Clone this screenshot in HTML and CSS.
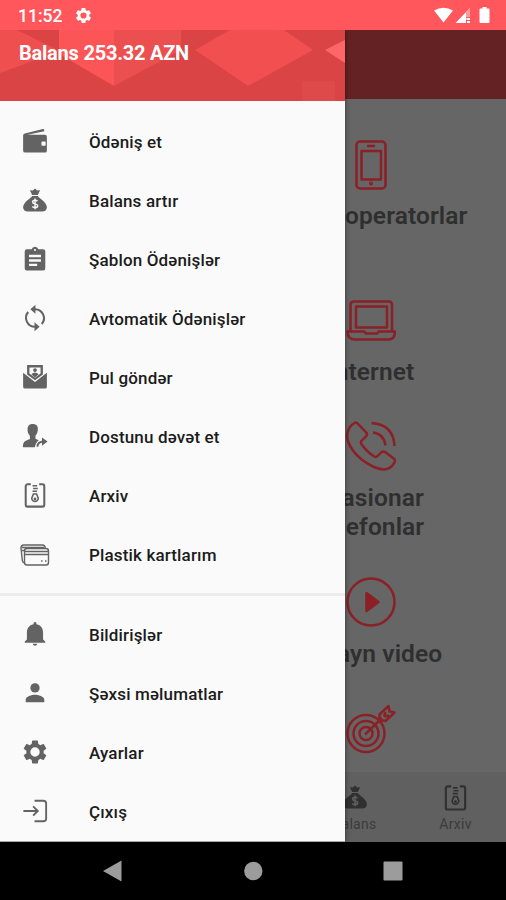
FILE: index.html
```html
<!DOCTYPE html>
<html lang="az">
<head>
<meta charset="utf-8">
<title>Balans</title>
<link rel="stylesheet" href="styles.css">
</head>
<body>
<svg class="defs" width="0" height="0">
  <symbol id="gear" viewBox="0 0 24 24"><path d="M19.14 12.94c.04-.3.06-.61.06-.94s-.02-.64-.07-.94l2.03-1.58a.49.49 0 0 0 .12-.61l-1.92-3.32a.49.49 0 0 0-.59-.22l-2.39.96a7 7 0 0 0-1.62-.94l-.36-2.54a.48.48 0 0 0-.48-.41h-3.84a.48.48 0 0 0-.47.41l-.36 2.54a7.3 7.3 0 0 0-1.62.94l-2.39-.96a.48.48 0 0 0-.59.22L2.74 8.87a.48.48 0 0 0 .12.61l2.03 1.58a6.7 6.7 0 0 0 0 1.88l-2.03 1.58a.49.49 0 0 0-.12.61l1.92 3.32c.12.22.37.29.59.22l2.39-.96c.5.38 1.03.7 1.62.94l.36 2.54c.05.24.24.41.48.41h3.84c.24 0 .44-.17.47-.41l.36-2.54a7.3 7.3 0 0 0 1.62-.94l2.39.96c.22.08.47 0 .59-.22l1.92-3.32a.48.48 0 0 0-.12-.61zM12 15.9a3.9 3.9 0 1 1 0-7.8 3.9 3.9 0 0 1 0 7.8z"/></symbol>
  <symbol id="bag" viewBox="0 0 28 28"><path d="M8.500 3.400l3.200.3L14 1.500l2.300 2.200 3.200-.3-2.500 5.300h-6z"/><path d="M11 9.600h6c1.400 2.400 9.800 6.600 9.800 12.300 0 3-2.200 4.500-5 4.500H6.200c-2.800 0-5-1.500-5-4.500C1.200 16.200 9.600 12 11 9.600z"/><path class="cut" d="M16.700 15.300c-.7-.8-1.600-1.100-2.700-1.100-1.500 0-2.600.7-2.600 1.900 0 2.900 5.500 1.300 5.500 4.200 0 1.300-1.200 2-2.800 2-1.300 0-2.300-.4-3-1.200M14 12.500v11.500"/></symbol>
  <symbol id="archive" viewBox="0 0 28 28"><path class="line" d="M9.500 2.500H6a2 2 0 0 0-2 2v20a2 2 0 0 0 2 2h16a2 2 0 0 0 2-2v-20a2 2 0 0 0-2-2h-3.500"/><path class="line thin" d="M11.300 4h5M12 7h5M11.300 10h5M12.300 13h3.400l1.800 4.500a3.500 3.500 0 1 1-7 0z"/><circle cx="14" cy="18.300" r="1.500"/></symbol>
</svg>

<header class="status">
  <span class="clock">11:52</span>
  <svg class="status-gear" width="19" height="19"><use href="#gear"/></svg>
  <svg class="signals" width="58" height="20" viewBox="0 0 58 20">
    <path d="M0 4.500Q9.500-1 19 4.500L9.500 16.500z"/>
    <path d="M36 2v9h-4v6H21.500z"/><path class="dim" d="M36 2v9h-4V6z"/><path d="M32.500 12h3.500v2h-3.500zM33 15h3v2h-3z"/>
    <path d="M48.500 1h4v1.500h2q1 0 1 1V16q0 1-1 1h-8q-1 0-1-1V3.500q0-1 1-1h2z"/>
  </svg>
</header>

<main class="screen">
  <section class="home">
    <div class="appbar"></div>
    <div class="services">
      <div class="tile">
        <svg class="red" width="50" height="50" viewBox="0 0 50 50"><rect x="10.500" y="1.500" width="29" height="47" rx="3.500"/><rect x="15.500" y="11" width="19.500" height="28.500"/><path d="M21 6h8"/><circle cx="25" cy="43.500" r=".8"/></svg>
        <span class="label rest">operatorlar</span>
      </div>
      <div class="tile tight">
        <svg class="red" width="50" height="50" viewBox="0 0 50 50"><path d="M4.500 35V9Q4.500 5.500 8 5.500h34.500Q46 5.500 46 9v26"/><rect x="10" y="10.500" width="31" height="21"/><path d="M1.500 35.500h16.500l2 2h11l2-2h16q0 8-7 8H9q-7.500 0-7.500-8z"/></svg>
        <span class="label">Internet</span>
      </div>
      <div class="tile">
        <svg class="red" width="50" height="50" viewBox="0 0 50 50"><path d="M8.500 2q1.800-1 3.500.8l8.300 8.700q1.500 2-.2 3.800l-4.700 4.500q-1 1.400 0 3.200 5.500 8 13 12.500 1.500 1 3-.4l4.200-4q1.700-1.300 3.500 0l8.800 6.700q1.900 1.700.5 3.900c-4 7.300-10.800 8.300-19.300 4.800C16 40.500 6.500 31.500 2.300 21-.2 14 1.500 6 8.500 2z"/><path d="M25.500 2Q47.500 3.500 48.500 25M27 11.500q11 1.500 12.500 13"/></svg>
        <span class="label">Stasionar<br>telefonlar</span>
      </div>
      <div class="tile">
        <svg class="red" width="50" height="50" viewBox="0 0 50 50"><circle cx="25" cy="25" r="23.500"/><path class="solid" d="M20.500 16v18l12-9z"/></svg>
        <span class="label">Onlayn video</span>
      </div>
      <div class="tile">
        <svg class="red" width="50" height="50" viewBox="0 0 50 50"><circle cx="20" cy="29.500" r="18.500"/><circle cx="20" cy="29.500" r="12.500"/><circle cx="20" cy="29.500" r="6.500"/><path d="M19 30.500L36 14M33.500 16V10.500l9-8.500 1 5.500 5 1-9 8.500zM38 12.500l1.500-4.500M38 12.500l5-1"/></svg>
      </div>
    </div>
    <nav class="tabs">
      <div class="tab balance"><svg width="26" height="26"><use href="#bag"/></svg><span>Balans</span></div>
      <div class="tab"><svg width="27" height="27"><use href="#archive"/></svg><span>Arxiv</span></div>
    </nav>
  </section>

  <aside class="drawer">
    <div class="account">
      <svg class="pattern" width="345" height="71" viewBox="0 0 345 71">
        <path fill="#f04f50" d="M0 0h17l43 21-60 22z"/>
        <path fill="#fb5557" d="M59 0h55v56L59 24z"/>
        <path fill="#ec4f50" d="M114 0h67v20l-67 36z"/>
        <path fill="#f14f50" d="M195 20l35-20h54l29 20-65 36z"/>
        <path fill="#ff6668" d="M325 20l20-10v23z"/>
        <path fill="#de4949" d="M302 51h33v20h-33z"/>
      </svg>
      <span class="sum">Balans 253.32 AZN</span>
    </div>
    <ul class="menu">
      <li><svg width="28" height="28" viewBox="0 0 28 28"><path d="M3 5.800L22.500 1.200q1.500-.2 1.500 1.400v1L6 7.300h18.500q2.300 0 2.300 2V24.500q0 2-2 2H3.500q-2.300 0-2.300-2V8q0-1.700 1.800-2.200z"/><rect x="21" y="14.500" width="4.500" height="4.500" rx="1" fill="#fafafa"/></svg>Ödəniş et</li>
      <li><svg width="28" height="28"><use href="#bag"/></svg>Balans artır</li>
      <li><svg width="28" height="28" viewBox="0 0 24 24"><path d="M19.500 3h-4.400a3.200 3.200 0 0 0-6.200 0H4.500a2 2 0 0 0-2 2v15.500a2 2 0 0 0 2 2h15a2 2 0 0 0 2-2V5a2 2 0 0 0-2-2zM12 2.700a1 1 0 1 1 0 2 1 1 0 0 1 0-2zM14 18.500H6.500v-2.200H14zm3.500-4h-11v-2.200h11zm0-4.200h-11V8h11z"/></svg>Şablon Ödənişlər</li>
      <li><svg width="28" height="28" viewBox="0 0 28 28"><path class="line" d="M6.700 7.500A9.700 9.700 0 0 0 14 23.500M21.300 20.500A9.700 9.700 0 0 0 14 4.500"/><path d="M14.500-.3v9.600L9 4.500zM13.500 18.700v9.600l5.500-4.800z"/></svg>Avtomatik Ödənişlər</li>
      <li><svg width="28" height="28" viewBox="0 0 28 28"><path fill-rule="evenodd" d="M5.500 1.200h17v10L14 17.500l-8.500-6.300zM8 3.700v6.500l6 4.500 6-4.500V3.700z"/><circle cx="14" cy="6.500" r="2"/><path d="M10 11q4-3.500 8 0L14 14.500zM1.200 9.500L14 19.500 26.800 9.500v15q0 2-2 2H3.200q-2 0-2-2z"/></svg>Pul göndər</li>
      <li><svg width="28" height="28" viewBox="0 0 28 28"><path d="M11.500 1.200c4 0 6 2.300 5.500 6.300-.2 3-1.400 5-2.500 6.200v3.200l3.500 1.600c-2.500 2-3.800 4.500-4 7.700H1c0-5 1.500-6.500 5-7.800l2.500-1.300v-3.400C7 12.200 6 10 6 7.500c0-4 1.500-6.300 5.500-6.300z"/><path class="line" d="M16.500 25.500q.5-5.500 7-5.500"/><path d="M21.500 15.500l6 4.500-6 4.500z"/></svg>Dostunu dəvət et</li>
      <li><svg width="28" height="28"><use href="#archive"/></svg>Arxiv</li>
      <li><svg class="cards" width="32" height="28" viewBox="0 0 32 28"><path d="M5.500 21.500H4.500q-1-.5-1.200-2L2 7q0-3 3-3h18.500q2.500 0 2.700 3M3 9.500h3M3 6.500h22"/><rect x="5.500" y="7.500" width="24" height="16.500" rx="2.500"/><path d="M5.500 10.500h24M5.500 13.500h24M22 20h1.500M26 20h1.500"/></svg>Plastik kartlarım</li>
    </ul>
    <ul class="menu second">
      <li><svg width="28" height="28" viewBox="0 0 28 28"><path d="M14 1.200q1.700 0 1.700 2.300c4.800 1 7 4.400 7 9V20l2.300 2v1.500H3V22l2.300-2v-7.500c0-4.600 2.200-8 7-9Q12.300 1.200 14 1.200zM11.500 24.500h5q-.5 2.200-2.500 2.200t-2.500-2.200z"/></svg>Bildirişlər</li>
      <li><svg width="28" height="28" viewBox="0 0 28 28"><circle cx="14" cy="8.500" r="5"/><path d="M4 24v-2.500c0-3.800 6.500-5.500 10-5.500s10 1.700 10 5.500V24z"/></svg>Şəxsi məlumatlar</li>
      <li><svg width="28" height="28" viewBox="1.200 1.200 21.600 21.600"><use href="#gear" width="24" height="24"/></svg>Ayarlar</li>
      <li><svg width="28" height="28" viewBox="0 0 28 28"><path class="line exit" d="M13.500 3H23q3 0 3 3v16q0 3-3 3h-9.500M1.500 14H17M12 9l5 5-5 5"/></svg>Çıxış</li>
    </ul>
  </aside>
</main>

<footer class="keys">
  <svg width="20" height="22" viewBox="0 0 20 22"><path d="M0 11L18.500.500v21z"/></svg>
  <svg width="20" height="20" viewBox="0 0 20 20"><circle cx="10.300" cy="10" r="9.200"/></svg>
  <svg width="20" height="20" viewBox="0 0 20 20"><rect x=".5" y=".5" width="19" height="19" rx="1"/></svg>
</footer>
</body>
</html>
```
FILE: styles.css
```css
* { box-sizing: border-box; }

body {
  margin: 0;
  height: 900px;
  display: flex;
  flex-direction: column;
  overflow: hidden;
  font-family: Roboto, "Noto Sans", sans-serif;
  background: #000;
}

svg { flex: none; }
.defs { position: absolute; }

.status {
  height: 30px;
  padding: 1px 14px 0 18px;
  display: flex;
  align-items: center;
  background: #ff575b;
  color: #fff;
  fill: #fff;
}
.clock { font-size: 17.5px; font-weight: 500; width: 56px; }
.signals { margin-left: auto; }
.dim { fill: #ff9a9c; }

.screen { position: relative; height: 812px; }

.home { height: 812px; display: flex; flex-direction: column; background: #666; }
.appbar { height: 69px; flex: none; background: #652225; }

.services {
  flex: 1;
  min-height: 0;
  margin-left: 236px;
  padding-top: 41px;
  display: grid;
  grid-template-rows: 156px 125px 156px 127px 60px;
}
.tile { display: flex; flex-direction: column; align-items: center; gap: 12px; }
.tight { gap: 11px; }
.red { fill: none; stroke: #8b2027; stroke-width: 2.5; stroke-linejoin: round; }
.solid { fill: #8b2027; }
.label {
  font-size: 24.5px;
  line-height: 29px;
  font-weight: 600;
  letter-spacing: .1px;
  color: #2f2f2f;
  text-align: center;
}
.rest { align-self: flex-start; margin: -1px 0 0 109px; }

.tabs {
  height: 70px;
  flex: none;
  display: flex;
  justify-content: flex-end;
  background: #606060;
}
.tab {
  width: 101px;
  padding: 12px 0 10px;
  display: flex;
  flex-direction: column;
  align-items: center;
  justify-content: space-between;
  font-size: 14px;
  line-height: 16px;
  letter-spacing: .3px;
  color: #3b3b3b;
  fill: #303030;
  --icon: #303030;
  --cut: #606060;
}

.drawer {
  position: absolute;
  left: 0;
  top: 0;
  width: 345px;
  height: 812px;
  background: #fafafa;
  border-bottom: 1px solid #aaa;
  box-shadow: 0 0 5px rgba(0, 0, 0, .5);
  clip-path: inset(0 -8px 0 0);
  --icon: #636363;
  --cut: #fafafa;
}
.account {
  position: relative;
  height: 71px;
  padding: 10px 19px;
  background: #db4445;
}
.pattern { position: absolute; left: 0; top: 0; }
.sum {
  position: relative;
  display: block;
  font-size: 20px;
  line-height: 26px;
  font-weight: 700;
  letter-spacing: -.22px;
  color: #fff;
  white-space: nowrap;
}

.menu { list-style: none; margin: 0; padding: 11px 0 9px; }
.menu li {
  height: 59px;
  padding-left: 22px;
  display: flex;
  align-items: center;
  font-size: 17px;
  font-weight: 500;
  letter-spacing: .15px;
  color: #1c1c1c;
  white-space: nowrap;
}
.menu svg { width: 26px; height: 26px; margin: 0 41px 1px 0; fill: var(--icon); overflow: visible; }
.menu .cards {
  width: 32px;
  height: 28px;
  margin: 0 38px 0 -3px;
  fill: none;
  stroke: var(--icon);
  stroke-width: 1.4;
}
.second { border-top: 3px solid #ececec; padding: 9px 0 0; }

.line { fill: none; stroke: var(--icon); stroke-width: 2.2; }
.thin { stroke-width: 1.7; }
.exit { stroke-width: 2; }
.cut { fill: none; stroke: var(--cut); stroke-width: 1.6; }

.keys {
  height: 58px;
  padding: 0 103px;
  display: flex;
  align-items: center;
  justify-content: space-between;
  background: #000;
  fill: #9c9c9c;
}
```
